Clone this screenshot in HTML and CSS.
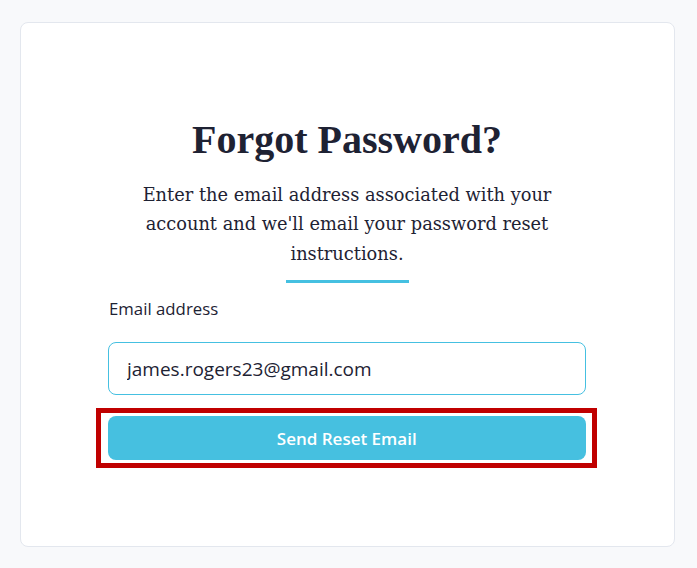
FILE: index.html
```html
<!DOCTYPE html>
<html lang="en">
<head>
<meta charset="utf-8">
<title>Forgot Password</title>
<link rel="stylesheet" href="styles.css">
</head>
<body>
<main class="page">
  <section class="card">
    <h1 class="title">Forgot Password?</h1>
    <p class="lead">Enter the email address associated with your account and we'll email your password reset instructions.</p>
    <div class="rule"></div>
    <form class="form">
      <label class="label" for="email">Email address</label>
      <input class="input" id="email" type="email" value="james.rogers23@gmail.com">
      <div class="highlight">
        <button class="btn" type="button">Send Reset Email</button>
      </div>
    </form>
  </section>
</main>
</body>
</html>
```
FILE: styles.css
```css
* { box-sizing: border-box; }
html, body { margin: 0; padding: 0; }
body {
  background: #f8f9fb;
  font-family: "Open Sans", "Noto Sans", sans-serif;
  color: #1d2233;
}
.page {
  padding: 22px 22px 21px 20px;
}
.card {
  height: 525px;
  background: #ffffff;
  border: 1px solid #e3e7ee;
  border-radius: 8px;
  padding: 95px 88px 0 87px;
  display: flex;
  flex-direction: column;
  align-items: center;
}
.title {
  margin: 0;
  font-family: "Liberation Serif", "DejaVu Serif", serif;
  font-weight: 700;
  font-size: 40px;
  line-height: 44px;
  color: #1e2233;
}
.lead {
  margin: 17.5px 0 0;
  font-family: "DejaVu Serif", "Liberation Serif", serif;
  font-size: 17.8px;
  line-height: 29.5px;
  text-align: center;
  color: #1e2233;
  max-width: 430px;
}
.rule {
  width: 123px;
  height: 3px;
  background: #45c0e1;
  margin-top: 12px;
}
.form {
  align-self: stretch;
  display: flex;
  flex-direction: column;
  margin-top: 15px;
}
.label {
  font-size: 16.8px;
  line-height: 22px;
  margin-left: 1px;
  color: #1d2233;
}
.input {
  margin-top: 22px;
  height: 53px;
  border: 1px solid #45c0e1;
  border-radius: 8px;
  padding: 0 18px;
  font-family: "Open Sans", "Noto Sans", sans-serif;
  font-size: 19px;
  color: #1d2233;
  background: #fff;
  outline: none;
}
.highlight {
  margin: 13px -11px 0 -12px;
  border: 5px solid #c00000;
  padding: 3px 6px 3px 6.5px;
}
.btn {
  display: block;
  width: 100%;
  height: 44px;
  border: 0;
  border-radius: 8px;
  background: #46c0e0;
  color: #ffffff;
  font-family: "Open Sans", "Noto Sans", sans-serif;
  font-size: 17px;
  font-weight: 600;
  cursor: pointer;
}
```
